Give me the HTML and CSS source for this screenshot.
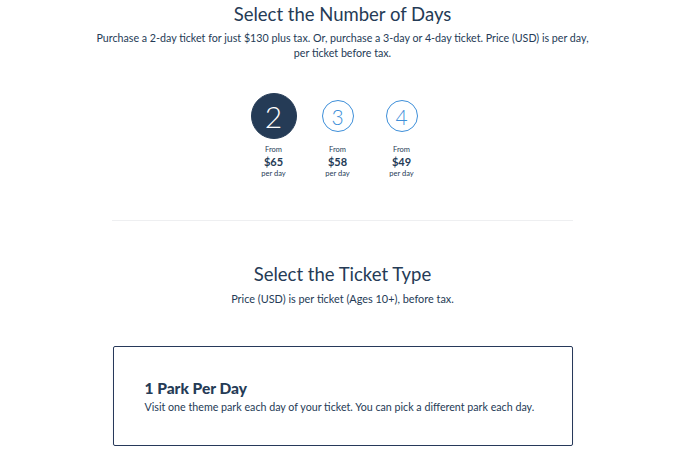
FILE: index.html
```html
<!DOCTYPE html>
<html>
<head>
<meta charset="utf-8">
<link rel="stylesheet" href="styles.css">
</head>
<body>
<main class="page">
  <section class="days">
    <h1 class="title">Select the Number of Days</h1>
    <p class="sub">Purchase a 2-day ticket for just $130 plus tax. Or, purchase a 3-day or 4-day ticket. Price (USD) is per day,<br>per ticket before tax.</p>
    <div class="day-row">
      <div class="day">
        <div class="circle-wrap"><span class="circle selected">2</span></div>
        <div class="from">From</div>
        <div class="price">$65</div>
        <div class="per">per day</div>
      </div>
      <div class="day">
        <div class="circle-wrap"><span class="circle">3</span></div>
        <div class="from">From</div>
        <div class="price">$58</div>
        <div class="per">per day</div>
      </div>
      <div class="day">
        <div class="circle-wrap"><span class="circle">4</span></div>
        <div class="from">From</div>
        <div class="price">$49</div>
        <div class="per">per day</div>
      </div>
    </div>
  </section>
  <hr class="divider">
  <section class="types">
    <h2 class="title">Select the Ticket Type</h2>
    <p class="sub">Price (USD) is per ticket (Ages 10+), before tax.</p>
    <div class="card">
      <h3 class="card-title">1 Park Per Day</h3>
      <p class="card-text">Visit one theme park each day of your ticket. You can pick a different park each day.</p>
    </div>
  </section>
</main>
</body>
</html>
```
FILE: styles.css
```css
* { box-sizing: border-box; }
html, body { margin: 0; padding: 0; background: #fff; }
body {
  font-family: "Lato", "Noto Sans", sans-serif;
  color: #253b56;
  padding-right: 15px;
}
.page { display: flex; flex-direction: column; align-items: center; }
.days, .types { display: flex; flex-direction: column; align-items: center; width: 100%; }
.title {
  margin: 0;
  font-weight: 400;
  font-size: 18.5px;
  line-height: 24px;
  color: #253b56;
}
.days .title { margin-top: 2px; }
.sub {
  margin: 4px 0 0;
  font-size: 10.7px;
  line-height: 15px;
  text-align: center;
  color: #253b56;
}
.day-row { display: flex; margin-top: 33px; margin-right: 10px; }
.day { width: 64px; display: flex; flex-direction: column; align-items: center; }
.circle-wrap { height: 46px; display: flex; align-items: center; justify-content: center; }
.circle {
  width: 32px; height: 32px; border-radius: 50%;
  border: 1.3px solid #3e8fd9; color: #3e8fd9;
  display: flex; align-items: center; justify-content: center;
  font-size: 21px; font-weight: 300;
}
.circle.selected {
  width: 46px; height: 46px; background: #253b56; border-color: #253b56; color: #fff;
  font-size: 30px;
}
.from { margin-top: 6px; font-size: 7.5px; line-height: 10px; }
.price { font-size: 11px; font-weight: 700; line-height: 14px; }
.per { font-size: 7.5px; line-height: 10px; }
.divider {
  width: 461px; margin: 41px 0 0; border: 0; height: 1px; background: #eeeff1;
}
.types .title { margin-top: 41px; }
.types .sub { margin-top: 5px; font-size: 10.9px; }
.card {
  margin-top: 40px;
  width: 460px; height: 100px;
  border: 1.5px solid #27395a;
  border-radius: 2px;
  padding: 31px 31px;
  box-shadow: 0 2px 3px rgba(0,0,0,0.06);
}
.card-title { margin: 0; font-size: 15.5px; font-weight: 900; line-height: 20px; }
.card-text { margin: 2px 0 0; font-size: 10.7px; line-height: 14px; }
```
